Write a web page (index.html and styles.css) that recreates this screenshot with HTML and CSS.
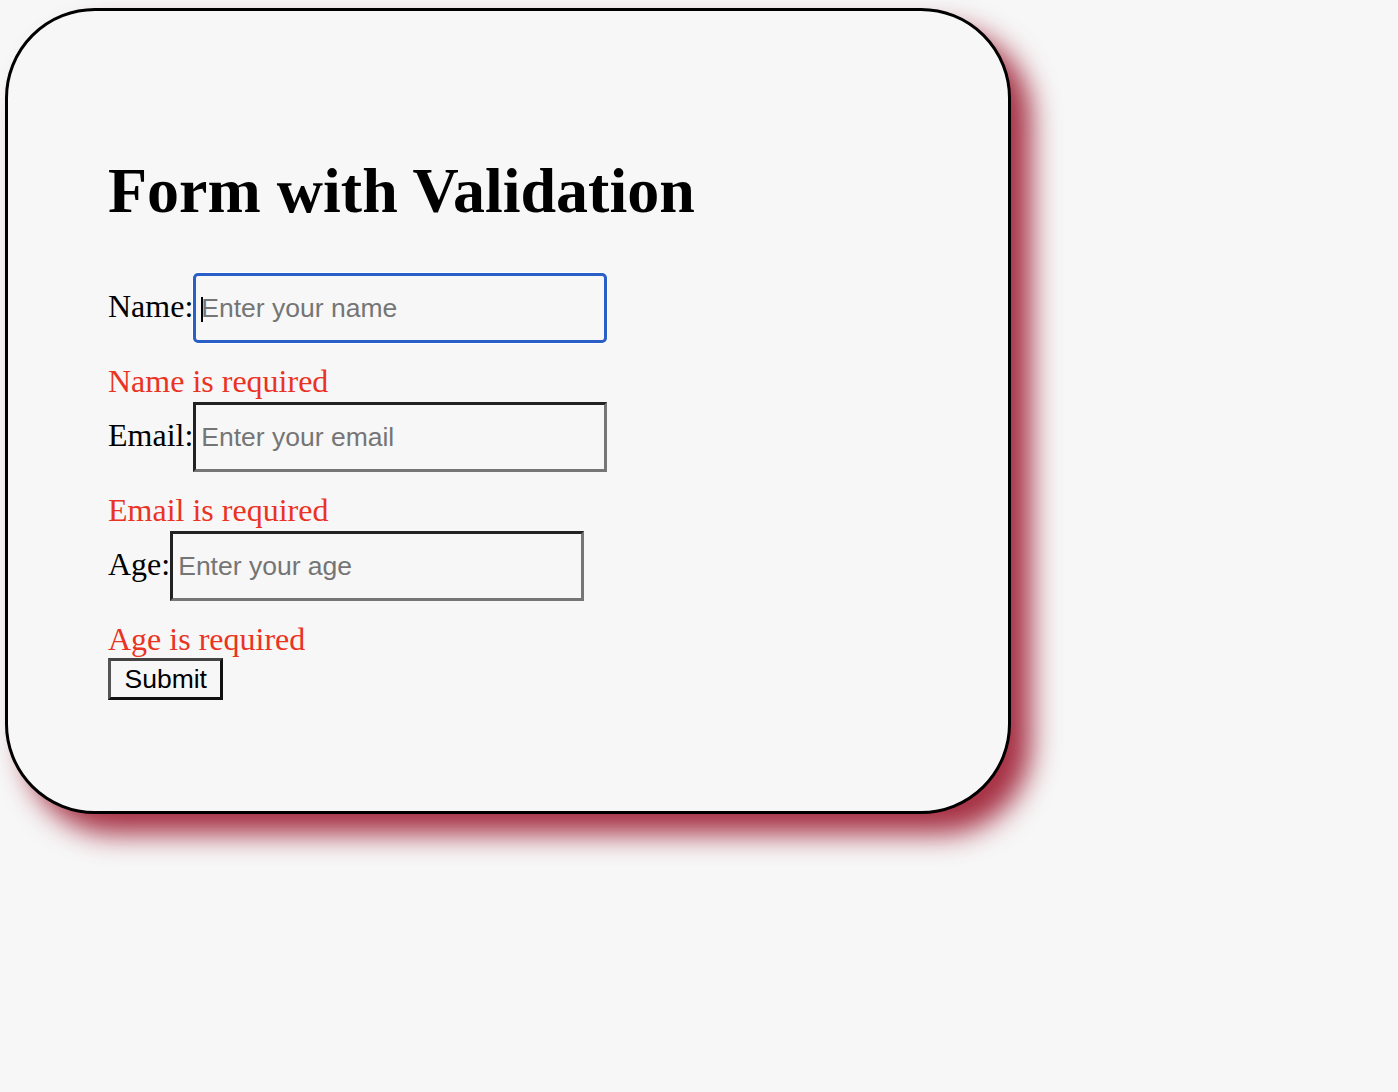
FILE: index.html
```html
<!DOCTYPE html>
<html lang="en">
<head>
<meta charset="utf-8">
<title>Form with Validation</title>
<link rel="stylesheet" href="styles.css">
</head>
<body>
<div class="card">
  <h1 class="title">Form with Validation</h1>
  <form class="form">
    <div class="field"><label class="label">Name:</label><span class="focus-wrap"><input class="input is-focused" type="text" placeholder="Enter your name"><span class="caret"></span></span></div>
    <div class="error">Name is required</div>
    <div class="field"><label class="label">Email:</label><input class="input" type="text" placeholder="Enter your email"></div>
    <div class="error">Email is required</div>
    <div class="field"><label class="label">Age:</label><input class="input" type="text" placeholder="Enter your age"></div>
    <div class="error">Age is required</div>
    <div class="actions"><button class="submit" type="button">Submit</button></div>
  </form>
</div>
</body>
</html>
```

FILE: styles.css
```css
html {
  margin: 0;
  padding: 0;
  background: #f7f7f7;
}

body {
  margin: 0;
  min-height: 1092px;
  box-sizing: border-box;
  padding: 8px 0 0 5px;
  font-family: "Liberation Serif", "Times New Roman", serif;
}

.card {
  width: 800px;
  height: 600px;
  padding: 100px;
  border: 3px solid #000;
  border-radius: 90px;
  background: #f7f7f7;
  box-shadow: 20px 20px 28px rgba(158, 30, 52, 0.92);
}

.title {
  font-size: 64px;
  font-weight: bold;
  margin: 0.67em 0 44px;
  line-height: 1.15;
  color: #000;
}

.form {
  font-size: 32px;
  color: #000;
}

.label {
  font-size: 32px;
}

.input {
  box-sizing: border-box;
  width: 414px;
  height: 70px;
  margin: 2px 0 0;
  padding: 0 5px;
  border-width: 3px;
  border-style: solid;
  border-color: #222 #767676 #767676 #222;
  background: #f7f7f7;
  font-family: "Liberation Sans", Arial, sans-serif;
  font-size: 26.5px;
  color: #000;
  vertical-align: baseline;
  outline: none;
}

.input::placeholder {
  color: #757575;
}

.input.is-focused {
  border-color: #2b5fc8;
  border-radius: 5px;
  box-shadow: 0 0 0 1px #fff;
}

.focus-wrap {
  position: relative;
  display: inline-block;
}

.caret {
  position: absolute;
  left: 8px;
  top: 26px;
  width: 2px;
  height: 25px;
  background: #000;
}

.error {
  margin-top: 20px;
  color: #ea3323;
  font-size: 32px;
}

.actions {
  padding-top: 0;
}

.submit {
  display: inline-block;
  box-sizing: border-box;
  height: 42px;
  padding: 0 13.5px;
  margin: 0;
  border-width: 3px;
  border-style: solid;
  border-color: #444 #111 #111 #555;
  background: #f7f7f7;
  font-family: "Liberation Sans", Arial, sans-serif;
  font-size: 26.5px;
  line-height: 36px;
  color: #000;
  vertical-align: baseline;
}
```
